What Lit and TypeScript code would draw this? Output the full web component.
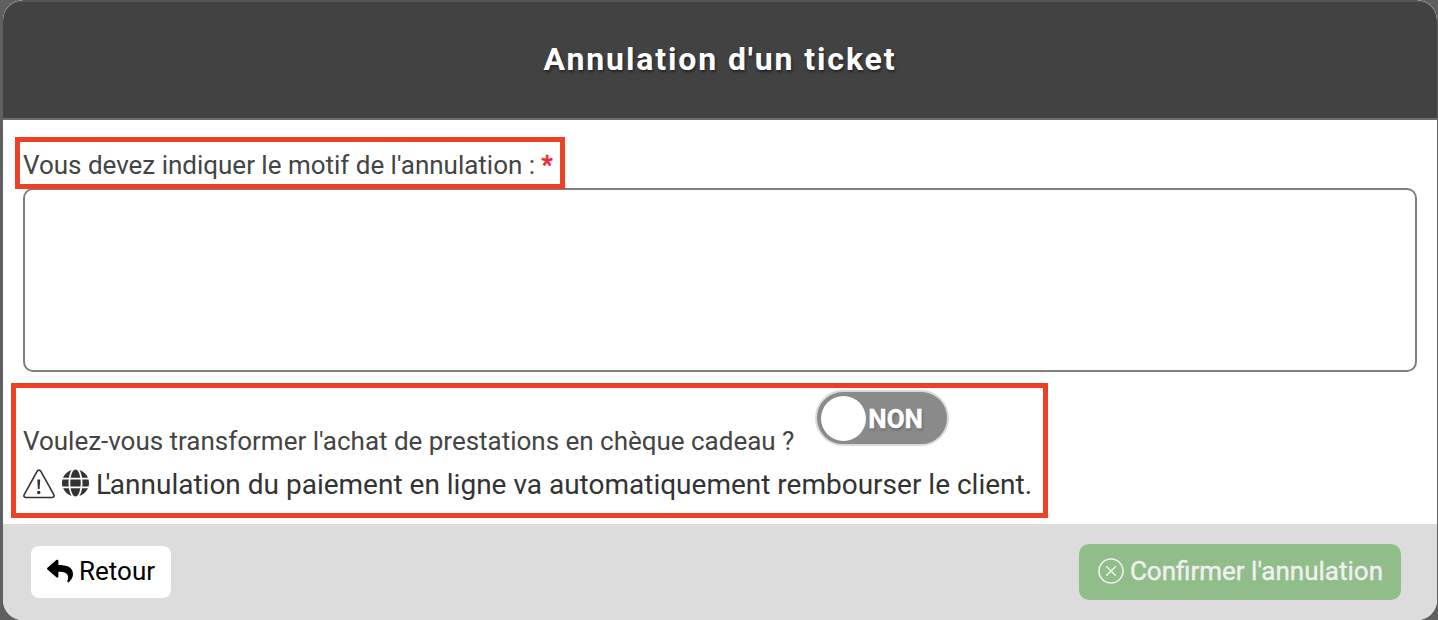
import { LitElement, html, css } from "lit";
import { customElement, property, state } from "lit/decorators.js";

@customElement("toggle-switch")
class ToggleSwitch extends LitElement {
  @property({ type: Boolean }) checked = false;

  render() {
    return html`
      <button
        class="track ${this.checked ? "on" : ""}"
        role="switch"
        aria-checked=${this.checked ? "true" : "false"}
        @click=${() => (this.checked = !this.checked)}>
        <span class="knob"></span>
        <span class="text">${this.checked ? "OUI" : "NON"}</span>
      </button>
    `;
  }

  static styles = css`
    :host {
      display: block;
    }

    .track {
      box-sizing: border-box;
      width: 134px;
      height: 56px;
      display: flex;
      align-items: center;
      gap: 2px;
      padding: 0 4px;
      border: 2px solid #dadada;
      border-radius: 28px;
      background: #8a8a8a;
      cursor: pointer;
    }

    .track.on {
      flex-direction: row-reverse;
      background: #5cb85c;
    }

    .knob {
      width: 45px;
      height: 45px;
      border-radius: 50%;
      background: white;
    }

    .text {
      padding-top: 1px;
      color: white;
      font: bold 26px/30px Roboto, sans-serif;
      text-shadow: 1px 2px 3px rgba(0, 0, 0, 0.25);
      -webkit-text-stroke: 0.4px white;
    }
  `;
}

@customElement("app-root")
class AppRoot extends LitElement {
  @state() reason = "";

  render() {
    return html`
      <div class="modal">
        <header class="header">
          <h1 class="title">Annulation d'un ticket</h1>
        </header>
        <main class="body">
          <div class="reason-line">
            <label class="label" for="reason"
              >Vous devez indiquer le motif de l'annulation :
              <span class="required">*</span></label
            >
            <div class="frame frame-reason"></div>
          </div>
          <textarea
            id="reason"
            class="reason"
            .value=${this.reason}
            @input=${(e: InputEvent) =>
              (this.reason = (e.target as HTMLTextAreaElement).value)}></textarea>
          <div class="options">
            <div class="voucher">
              <span class="label"
                >Voulez-vous transformer l'achat de prestations en chèque cadeau
                ?</span
              >
              <toggle-switch></toggle-switch>
            </div>
            <div class="warning">
              <svg class="icon-warning" viewBox="0 0 32 30" fill="none" stroke="currentColor">
                <path
                  stroke-width="1.6"
                  stroke-linejoin="round"
                  d="M14.1 2.3 1.2 25.6c-.8 1.5 0 2.9 1.7 2.9h26.2c1.7 0 2.5-1.4 1.7-2.9L17.9 2.3c-.9-1.6-2.9-1.6-3.8 0Z"></path>
                <path
                  fill="currentColor"
                  stroke="none"
                  d="M14.3 10.4h2.9l-.6 9.6h-1.7ZM17.5 23.5a1.75 1.75 0 1 1-3.5 0a1.75 1.75 0 0 1 3.5 0Z"></path>
              </svg>
              <svg class="icon-globe" viewBox="0 0 496 512" fill="currentColor">
                <path
                  d="M336.5 160C322 70.7 287.8 8 248 8s-74 62.7-88.5 152h177zM152 256c0 22.2 1.2 43.5 3.3 64h185.3c2.1-20.5 3.3-41.8 3.3-64s-1.2-43.5-3.3-64H155.3c-2.1 20.5-3.3 41.8-3.3 64zm324.7-96c-28.6-67.9-86.5-120.4-158-141.6 24.4 33.8 41.2 84.7 50 141.6h108zM177.2 18.4C105.8 39.6 47.8 92.1 19.3 160h108c8.7-56.9 25.5-107.8 49.9-141.6zM487.4 192H372.7c2.1 21 3.3 42.5 3.3 64s-1.2 43-3.3 64h114.6c5.5-20.5 8.6-41.8 8.6-64s-3.1-43.5-8.5-64zM120 256c0-21.5 1.2-43 3.3-64H8.6C3.2 212.5 0 233.8 0 256s3.2 43.5 8.6 64h114.6c-2-21-3.2-42.5-3.2-64zm39.5 96c14.5 89.3 48.7 152 88.5 152s74-62.7 88.5-152h-177zm159.3 141.6c71.4-21.2 129.4-73.7 158-141.6h-108c-8.8 56.9-25.6 107.8-50 141.6zM19.3 352c28.6 67.9 86.5 120.4 158 141.6-24.4-33.8-41.2-84.7-50-141.6h-108z"></path>
              </svg>
              <span class="warning-text"
                ><span class="tight">L</span>'annulation du paiement en ligne va
                automatiquement rembourser le client.</span
              >
            </div>
            <div class="frame frame-options"></div>
          </div>
        </main>
        <footer class="footer">
          <button class="button back">
            <svg class="icon" viewBox="0 0 512 512" fill="currentColor">
              <path
                d="M8.309 189.836L184.313 37.851C199.719 24.546 224 35.347 224 56.015v80.053c160.629 1.839 288 34.032 288 186.258 0 61.441-39.581 122.309-83.333 154.132-13.653 9.931-33.111-2.533-28.077-18.631 45.344-145.012-21.507-183.51-176.59-185.742V360c0 20.7-24.3 31.453-39.687 18.164l-176.004-152c-11.071-9.562-11.086-26.753 0-36.328z"></path>
            </svg>
            <span>Retour</span>
          </button>
          <button class="button confirm">
            <svg
              class="icon"
              viewBox="0 0 26 26"
              fill="none"
              stroke="currentColor"
              stroke-width="1.6"
              stroke-linecap="round">
              <circle cx="13" cy="13" r="12"></circle>
              <path d="m8.7 8.7 8.6 8.6m0-8.6-8.6 8.6"></path>
            </svg>
            <span>Confirmer l'annulation</span>
          </button>
        </footer>
      </div>
    `;
  }

  static styles = css`
    :host {
      display: block;
      box-sizing: border-box;
      height: 620px;
      padding: 0 1px 0 3px;
      background: #606060;
      font-family: Roboto, sans-serif;
    }

    .modal {
      height: 100%;
      display: flex;
      flex-direction: column;
      overflow: hidden;
      border-radius: 20px;
      background: white;
    }

    .header {
      box-sizing: border-box;
      height: 120px;
      display: flex;
      align-items: center;
      justify-content: center;
      padding-bottom: 3px;
      border-top: 2px solid #555;
      border-bottom: 2px solid #6f6f6f;
      border-radius: 20px 20px 0 0;
      background: #424242;
    }

    .title {
      margin: 0;
      color: white;
      font-size: 32px;
      font-weight: bold;
      line-height: 40px;
      letter-spacing: 1.88px;
      text-shadow: 1px 2px 3px rgba(0, 0, 0, 0.5);
    }

    .body {
      flex: 1;
      display: flex;
      flex-direction: column;
      padding: 0 20px;
    }

    .label {
      color: #444;
      font-size: 26px;
      line-height: 30px;
      letter-spacing: -0.015px;
      white-space: nowrap;
    }

    .required {
      color: #f5222d;
      -webkit-text-stroke: 0.6px #f5222d;
    }

    .reason-line {
      position: relative;
      padding: 30px 0 8px;
    }

    .reason {
      box-sizing: border-box;
      width: 100%;
      height: 184px;
      margin: 0;
      border: 2px solid #808080;
      border-radius: 10px;
      resize: none;
      outline: none;
      font: 26px/30px Roboto, sans-serif;
    }

    .options {
      position: relative;
      flex: 1;
      padding-top: 18px;
    }

    .voucher {
      display: flex;
      align-items: flex-start;
      gap: 21px;
    }

    .voucher .label {
      padding-top: 36px;
    }

    .warning {
      display: flex;
      align-items: flex-start;
      gap: 7px;
      margin-top: 12px;
      color: #333;
      font-size: 28px;
      line-height: 34px;
    }

    .warning-text {
      white-space: nowrap;
    }

    .tight {
      letter-spacing: -5.5px;
    }

    .icon-warning {
      width: 32px;
      height: 30px;
      margin-top: 1px;
    }

    .icon-globe {
      width: 27px;
      height: 28px;
      margin-top: 1px;
    }

    /* highlight frames sit on top of the form */
    .frame {
      position: absolute;
      box-sizing: border-box;
      border: 5px solid #ee4026;
      pointer-events: none;
    }

    .frame-reason {
      left: -8px;
      top: 17px;
      width: 550px;
      height: 52px;
    }

    .frame-options {
      left: -12px;
      top: 11px;
      width: 1037px;
      height: 135px;
    }

    .footer {
      box-sizing: border-box;
      height: 96px;
      display: flex;
      justify-content: space-between;
      align-items: center;
      padding: 0 36px 0 28px;
      background: #dcdcdc;
    }

    .button {
      display: flex;
      align-items: center;
      gap: 6px;
      border: none;
      border-radius: 8px;
      font: 26px/30px Roboto, sans-serif;
      white-space: nowrap;
      cursor: pointer;
    }

    .icon {
      width: 26px;
      height: 26px;
    }

    .back {
      height: 52px;
      padding: 0 16px 2px;
      background: white;
      color: black;
    }

    .confirm {
      height: 56px;
      padding: 0 18px 2px 19px;
      border-radius: 10px;
      background: #91bd8b;
      color: #f0f0f0;
      -webkit-text-stroke: 0.4px #f0f0f0;
    }
  `;
}
